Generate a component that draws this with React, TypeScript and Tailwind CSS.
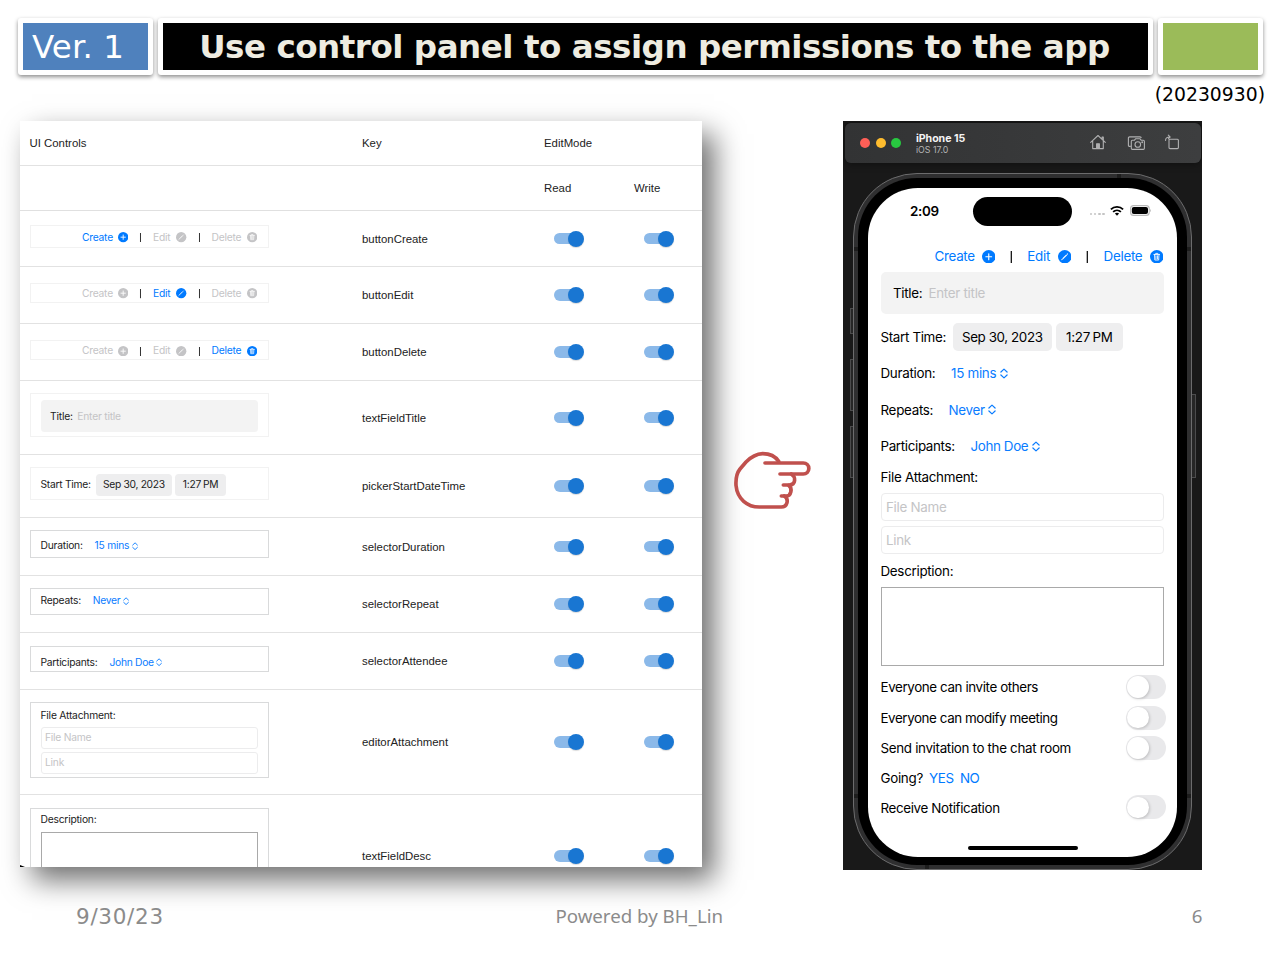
import type { ReactNode } from "react";

function PlusIcon() {
  return (
    <svg className="size-[13.5px] shrink-0" viewBox="0 0 14 14">
      <circle cx="7" cy="7" r="7" fill="currentColor" />
      <path d="M7 4v6M4 7h6" stroke="#fff" strokeWidth="1.2" strokeLinecap="round" />
    </svg>
  );
}

function PencilIcon() {
  return (
    <svg className="size-[13.5px] shrink-0" viewBox="0 0 14 14">
      <circle cx="7" cy="7" r="7" fill="currentColor" />
      <path d="M4.8 9.2 9 5" stroke="#fff" strokeWidth="1.3" />
      <path d="m9.6 4.4.3-.3M4 10l.3-.2" stroke="#fff" strokeWidth="1.1" strokeLinecap="round" />
    </svg>
  );
}

function TrashIcon() {
  return (
    <svg className="size-[13.5px] shrink-0" viewBox="0 0 14 14">
      <circle cx="7" cy="7" r="7" fill="currentColor" />
      <path
        d="M4 4.6h6M5.9 4.4v-.9h2.2v.9M4.7 4.8l.3 5.6h4l.3-5.6M6.2 6v3.2M7.8 6v3.2"
        stroke="#fff"
        strokeWidth=".9"
        fill="none"
        strokeLinejoin="round"
        strokeLinecap="round"
      />
    </svg>
  );
}

function UpDown() {
  return (
    <svg className="h-[11px] w-[8px] shrink-0" viewBox="0 0 8 11" fill="none" stroke="currentColor" strokeWidth="1.2" strokeLinecap="round" strokeLinejoin="round">
      <path d="M.9 4 4 1.1 7.1 4M.9 7 4 9.9 7.1 7" />
    </svg>
  );
}

function Separator() {
  return (
    <svg className="mt-[1px] h-[12px] w-[32.3px] shrink-0" viewBox="0 0 32.3 12">
      <path d="M16.3 0v12" stroke="currentColor" strokeWidth="1.2" />
    </svg>
  );
}

type Action = "create" | "edit" | "delete";

function Toolbar({ active }: { active?: Action }) {
  const tone = (a: Action) => (!active || active === a ? "text-[#007aff]" : "text-[#c4c4c6]");
  return (
    <div className="flex h-[31px] items-center pl-[54px]">
      <span className={`flex items-center ${tone("create")}`}>
        <span className="w-[47px]">Create</span>
        <PlusIcon />
      </span>
      <Separator />
      <span className={`flex items-center ${tone("edit")}`}>
        <span className="w-[30.5px]">Edit</span>
        <PencilIcon />
      </span>
      <Separator />
      <span className={`flex items-center ${tone("delete")}`}>
        <span className="w-[46px]">Delete</span>
        <TrashIcon />
      </span>
    </div>
  );
}

function TitleField() {
  return (
    <div className="flex h-[42px] items-center rounded-[5px] bg-[#f3f3f3] pt-[1px] pl-[12.5px]">
      <span className="w-[35.5px]">Title:</span>
      <span className="text-[#c4c4c6]">Enter title</span>
    </div>
  );
}

function StartTime() {
  return (
    <div className="flex h-[28px] items-center">
      <span className="w-[72px] tracking-[-0.34px]">Start Time:</span>
      <span className="flex h-[28px] w-[99.5px] items-center justify-center rounded-[5px] bg-[#eeeeef] tracking-[-0.4px]">Sep 30, 2023</span>
      <span className="ml-[3.5px] flex h-[28px] w-[67.5px] items-center justify-center rounded-[5px] bg-[#eeeeef] [word-spacing:-1px]">1:27 PM</span>
    </div>
  );
}

function Picker({ label, labelWidth, value, valueWidth }: { label: string; labelWidth: string; value: string; valueWidth: string }) {
  return (
    <div className="flex h-[27px] items-center">
      <span className={labelWidth}>{label}</span>
      <span className="flex items-center text-[#0a7cff]">
        <span className={valueWidth}>{value}</span>
        <UpDown />
      </span>
    </div>
  );
}

const Duration = () => <Picker label="Duration:" labelWidth="w-[70.5px]" value="15 mins" valueWidth="w-[49px]" />;
const Repeats = () => <Picker label="Repeats:" labelWidth="w-[68px]" value="Never" valueWidth="w-[39.5px]" />;
const Participants = () => <Picker label="Participants:" labelWidth="w-[90px] tracking-[-0.35px]" value="John Doe" valueWidth="w-[61px] tracking-[-0.38px]" />;

function Attachment() {
  return (
    <div className="flex flex-col">
      <div className="flex h-[31px] items-center">File Attachment:</div>
      <div className="flex h-[28px] items-center rounded-[4px] border border-[#ececed] pl-[4.5px] text-[#c4c4c6]">File Name</div>
      <div className="mt-[5px] flex h-[28px] items-center rounded-[4px] border border-[#ececed] pl-[4.5px] text-[#c4c4c6]">Link</div>
    </div>
  );
}

function Description() {
  return (
    <div className="flex flex-col">
      <div className="flex h-[33px] items-center pt-[1px]">Description:</div>
      <div className="h-[78.5px] border border-[#a9a9a9]" />
    </div>
  );
}

function PhoneToggle({ label, height, tracking }: { label: string; height: string; tracking: string }) {
  return (
    <div className={`-mr-[1.5px] flex items-center justify-between ${height}`}>
      <span className={`pt-[0.5px] ${tracking}`}>{label}</span>
      <span className="flex h-[24px] w-[40px] items-center rounded-full bg-[#e9e9eb] px-[1.5px]">
        <span className="size-[21.5px] rounded-full bg-white shadow-[1px_1px_3px_rgba(0,0,0,0.18)]" />
      </span>
    </div>
  );
}

function MuiSwitch() {
  return (
    <span className="flex h-[16px] w-[30px] items-center">
      <span className="h-[11.5px] w-[26px] rounded-full bg-[#8bb9e9]" />
      <span className="-ml-[12px] size-[16px] shrink-0 rounded-full bg-[#1976d2] shadow-[0_1px_1px_rgba(0,0,0,0.15)]" />
    </span>
  );
}

function Preview({ box, inner, children }: { box: string; inner: string; children: ReactNode }) {
  return (
    <div className={`w-[239px] shrink-0 self-start overflow-hidden border pl-[10px] font-[Inter,sans-serif] text-[#222] ${box}`}>
      <div className={`w-[283px] text-[13.4px] tracking-[-0.28px] [zoom:0.767] ${inner}`}>{children}</div>
    </div>
  );
}

const controls: { key: string; row: string; box: string; inner: string; view: ReactNode }[] = [
  { key: "buttonCreate", row: "h-[56px]", box: "mt-[14px] h-[23px] border-[#f2f2f2]", inner: "-mt-[0.5px]", view: <Toolbar active="create" /> },
  { key: "buttonEdit", row: "h-[57px]", box: "mt-[16px] h-[20px] border-[#f2f2f2]", inner: "-mt-[3px]", view: <Toolbar active="edit" /> },
  { key: "buttonDelete", row: "h-[57px]", box: "mt-[16px] h-[20px] border-[#f2f2f2]", inner: "-mt-[2.5px]", view: <Toolbar active="delete" /> },
  { key: "textFieldTitle", row: "h-[74px]", box: "mt-[12px] h-[44px] border-[#f2f2f2]", inner: "mt-[8px]", view: <TitleField /> },
  { key: "pickerStartDateTime", row: "h-[63px]", box: "mt-[12px] h-[33px] border-[#f2f2f2]", inner: "mt-[8px]", view: <StartTime /> },
  { key: "selectorDuration", row: "h-[58px]", box: "mt-[12px] h-[28px] border-[#d9dadb]", inner: "mt-[6px]", view: <Duration /> },
  { key: "selectorRepeat", row: "h-[57px]", box: "mt-[12px] h-[27px] border-[#d9dadb]", inner: "mt-[2px]", view: <Repeats /> },
  { key: "selectorAttendee", row: "h-[57px]", box: "mt-[13px] h-[26px] border-[#d9dadb]", inner: "mt-[6.5px]", view: <Participants /> },
  { key: "editorAttachment", row: "h-[105px]", box: "mt-[12px] h-[76px] border-[#d9dadb]", inner: "mt-[0.5px]", view: <Attachment /> },
  { key: "textFieldDesc", row: "h-[123px]", box: "mt-[13px] h-[104px] border-[#d9dadb]", inner: "-mt-[3px]", view: <Description /> },
];

function ControlTable() {
  return (
    <section className="relative h-[746px] w-[682px] shrink-0 overflow-hidden bg-white font-['Liberation_Sans',Arial,sans-serif] text-[11.4px] text-[#222]">
      <div className="flex h-[45px] items-center border-b border-[#e2e2e2] pt-[1px] pl-[9.5px]">
        <span className="w-[332.5px]">UI Controls</span>
        <span className="w-[182px]">Key</span>
        <span>EditMode</span>
      </div>
      <div className="flex h-[45px] items-center border-b border-[#e0e0e0] pt-[1px] pl-[524px]">
        <span className="w-[90px]">Read</span>
        <span>Write</span>
      </div>
      {controls.map((c) => (
        <div key={c.key} className={`flex items-center border-b border-[#e2e2e2] pl-[9.5px] ${c.row}`}>
          <Preview box={c.box} inner={c.inner}>
            {c.view}
          </Preview>
          <span className="ml-[93.5px] w-[192px] pt-[1.5px]">{c.key}</span>
          <span className="w-[90px]">
            <MuiSwitch />
          </span>
          <MuiSwitch />
        </div>
      ))}
      <svg className="absolute bottom-0 left-0 h-[2px] w-[5px]" viewBox="0 0 5 2">
        <path d="M0 0 5 2H0z" />
      </svg>
    </section>
  );
}

function PointingHand() {
  return (
    <svg className="ml-[18px] mt-[309px] h-[100px] w-[110px] shrink-0" viewBox="0 0 330 300" fill="none" stroke="#c0504d" strokeWidth="11" strokeLinecap="round" strokeLinejoin="round">
      <path d="M176 94C164 76 146 71 128 71 106 72 90 84 78 96L60 117C48 132 47 148 48 166 52 207 82 231 118 231H184C202 231 208 208 193 198" />
      <path d="M135 99H250a16.5 16.5 0 0 1 0 33H180" />
      <path d="M214 132C228 141 228 164 208 165H190" />
      <path d="M206 166C218 175 214 198 198 198H184" />
    </svg>
  );
}

function SimulatorBar() {
  return (
    <div className="mx-[1.5px] mt-[2px] flex h-[40px] shrink-0 items-center rounded-[6px] bg-linear-to-r from-[#323334] to-[#3d3e3f] pl-[15.5px] shadow-[0_0_8px_rgba(0,0,0,0.5)]">
      <span className="flex gap-[5.6px]">
        <span className="size-[10px] rounded-full bg-[#ff5f57]" />
        <span className="size-[10px] rounded-full bg-[#febc2e]" />
        <span className="size-[10px] rounded-full bg-[#28c840]" />
      </span>
      <span className="ml-[14.8px] flex w-[173px] flex-col font-[Inter,sans-serif]">
        <span className="pt-[1px] text-[10.6px] leading-[12px] font-bold tracking-[-0.05px] text-[#f4f4f4]">iPhone 15</span>
        <span className="text-[8.8px] leading-[10px] text-[#b4b4b5]">iOS 17.0</span>
      </span>
      <span className="flex items-center text-[#b0b0b1]">
        <svg className="-mt-[2px] h-[16px] w-[18px]" viewBox="0 0 18 16" fill="none" stroke="currentColor" strokeWidth="1.1" strokeLinejoin="round" strokeLinecap="round">
          <path d="M1.7 8.4 9 1.5l7.3 6.9M3.7 7v7.6h10.6V7M14.3 6V3h-1.2v1.7" />
          <path d="M7.6 14.4V9.8h2.8v4.6z" fill="currentColor" />
        </svg>
        <svg className="ml-[20px] -mt-[1px] h-[16px] w-[19px]" viewBox="0 0 19 16" fill="none" stroke="currentColor" strokeWidth="1.1" strokeLinejoin="round">
          <path d="M3.8 11.4H2.6a1.2 1.2 0 0 1-1.2-1.2V3.1a1.2 1.2 0 0 1 1.2-1.2h10.4a1.2 1.2 0 0 1 1.2 1.2" />
          <path d="M5.4 5.3h1.9l1.2-1.5h4.6l1.2 1.5h2a1.1 1.1 0 0 1 1.1 1.1v6.9a1.1 1.1 0 0 1-1.1 1.1H5.4a1.1 1.1 0 0 1-1.1-1.1V6.4a1.1 1.1 0 0 1 1.1-1.1z" />
          <circle cx="10.8" cy="9.5" r="2.8" />
          <circle cx="15.2" cy="7.3" r=".4" fill="currentColor" />
        </svg>
        <svg className="ml-[18px] -mt-[2px] h-[16px] w-[16px]" viewBox="0 0 16 16" fill="none" stroke="currentColor" strokeWidth="1.1" strokeLinejoin="round" strokeLinecap="round">
          <rect x="5" y="5.2" width="9.4" height="9.4" rx="1" />
          <path d="M1.6 6.4C1.4 4.2 3 3 5.9 3M4.3 1.2 6.1 3 4.3 4.8" />
        </svg>
      </span>
    </div>
  );
}

function StatusBar() {
  return (
    <div className="flex h-[46px] items-center pl-[42px]">
      <span className="w-[63px] text-[13.4px] font-semibold tracking-[-0.35px]">2:09</span>
      <span className="h-[29px] w-[99px] rounded-full bg-black" />
      <span className="ml-[17.5px] mt-[6px] flex gap-[1.7px]">
        <span className="size-[2.6px] rounded-full bg-[#c4c4c4]" />
        <span className="size-[2.6px] rounded-full bg-[#c4c4c4]" />
        <span className="size-[2.6px] rounded-full bg-[#c4c4c4]" />
        <span className="size-[2.6px] rounded-full bg-[#c4c4c4]" />
      </span>
      <svg className="ml-[5.5px] h-[10px] w-[14px]" viewBox="0 0 14 10" fill="none" stroke="#000" strokeWidth="1.8">
        <path d="M.9 3.4C4.2.1 9.8.1 13.1 3.4M3.1 5.8c2.2-2 5.6-2 7.8 0" />
        <path d="M7 9.7 4.9 7.5c1.2-1 3-1 4.2 0z" fill="#000" stroke="none" />
      </svg>
      <svg className="-mt-[1px] ml-[5.5px] h-[11px] w-[22px]" viewBox="0 0 22 11">
        <rect x=".6" y=".6" width="18.6" height="9.8" rx="3" fill="none" stroke="#b8b8b8" strokeWidth="1.1" />
        <rect x="1.8" y="1.9" width="16.2" height="7.2" rx="2" />
        <path d="M20.2 3.9c1 .6 1 2.6 0 3.2z" fill="#b2b2b2" />
      </svg>
    </div>
  );
}

function Phone() {
  return (
    <section className="relative ml-[13px] flex h-[749px] w-[359px] shrink-0 flex-col overflow-hidden bg-[#191919]">
      <SimulatorBar />
      <span className="absolute top-[187px] left-[7px] h-[26px] w-[5px] border border-[#4c4c4d] bg-[#262626]" />
      <span className="absolute top-[238px] left-[7px] h-[52px] w-[5px] border border-[#4c4c4d] bg-[#262626]" />
      <span className="absolute top-[305px] left-[7px] h-[52px] w-[5px] border border-[#4c4c4d] bg-[#262626]" />
      <span className="absolute top-[273px] right-[6px] h-[84px] w-[5px] border border-[#4c4c4d] bg-[#262626]" />
      <div className="relative ml-[10px] mt-[10px] h-[697px] w-[339px] shrink-0 rounded-[64px] border border-[#6c6c6d] bg-[#2f2f30] p-[4px]">
        <div className="h-full rounded-[59px] bg-black px-[10px] pt-[10px] pb-[8.5px]">
          <div className="flex h-full flex-col overflow-hidden rounded-[50px] bg-white font-[Inter,sans-serif] text-[13.4px] tracking-[-0.3px] text-black">
            <StatusBar />
            <div className="flex flex-col pt-[7px] pr-[13px] pl-[12.5px]">
              <Toolbar />
              <TitleField />
              <div className="py-[9px]">
                <StartTime />
              </div>
              <Duration />
              <div className="py-[9.5px]">
                <Repeats />
              </div>
              <Participants />
              <div className="pt-[2px]">
                <Attachment />
              </div>
              <Description />
              <div className="pt-[6px]">
                <PhoneToggle label="Everyone can invite others" height="h-[30.7px]" tracking="tracking-[-0.4px]" />
                <PhoneToggle label="Everyone can modify meeting" height="h-[30.7px]" tracking="tracking-[-0.43px]" />
                <PhoneToggle label="Send invitation to the chat room" height="h-[30.7px]" tracking="tracking-[-0.33px]" />
              </div>
              <div className="flex h-[28.5px] items-center pt-[1px]">
                <span className="w-[48.5px]">Going?</span>
                <span className="w-[31px] text-[#007aff]">YES</span>
                <span className="tracking-[-0.5px] text-[#007aff]">NO</span>
              </div>
              <PhoneToggle label="Receive Notification" height="h-[30.5px]" tracking="tracking-[-0.37px]" />
            </div>
            <span className="mt-auto mb-[6.5px] h-[4px] w-[110px] self-center rounded-full bg-black" />
          </div>
        </div>
        <span className="absolute top-[73px] left-0 h-[4px] w-[4px] bg-[#1d1d1d]" />
        <span className="absolute top-[73px] right-0 h-[4px] w-[4px] bg-[#1d1d1d]" />
        <span className="absolute top-[620px] left-0 h-[4px] w-[4px] bg-[#1d1d1d]" />
        <span className="absolute top-[620px] right-0 h-[4px] w-[4px] bg-[#1d1d1d]" />
        <span className="absolute top-0 left-[263px] h-[4px] w-[4px] bg-[#1d1d1d]" />
        <span className="absolute bottom-0 left-[71px] h-[4px] w-[4px] bg-[#1d1d1d]" />
      </div>
    </section>
  );
}

export default function App() {
  return (
    <main className="flex h-[960px] w-[1280px] flex-col overflow-hidden bg-white font-['DejaVu_Sans',Verdana,sans-serif]">
      <header className="mt-[18px] flex h-[57px] shrink-0 gap-[5px] pl-[18px]">
        <div className="flex w-[135px] items-center rounded-[3px] border-5 border-white bg-[#4f81bd] pt-[2px] pl-[9px] text-[32.5px] tracking-[0.1px] whitespace-nowrap text-white shadow-[0_2px_4px_rgba(0,0,0,0.45)]">
          Ver. 1
        </div>
        <div className="flex w-[995px] items-center justify-center rounded-[3px] border-5 border-white bg-black pt-[2px] pr-[2px] text-[32.5px] font-bold tracking-[-0.46px] whitespace-nowrap text-[#eeece1] shadow-[0_2px_4px_rgba(0,0,0,0.45)]">
          Use control panel to assign permissions to the app
        </div>
        <div className="w-[105px] rounded-[3px] border-5 border-white bg-[#9bbb59] shadow-[0_2px_4px_rgba(0,0,0,0.45)]" />
      </header>
      <p className="flex h-[46px] shrink-0 items-start justify-end pt-[9px] pr-[15px] text-[18.8px] leading-[22px] text-black">(20230930)</p>
      <div className="flex h-[749px] shrink-0 items-start pl-[20px]">
        <div className="shadow-[12px_13px_27px_rgba(0,0,0,0.57)]">
          <ControlTable />
        </div>
        <PointingHand />
        <Phone />
      </div>
      <footer className="grid h-[92px] grid-cols-3 items-center pt-[2px] pr-[77.5px] pl-[76px] text-[#8b8b8b]">
        <span className="pt-[3px] text-[21.5px] tracking-[0.7px]">9/30/23</span>
        <span className="text-center font-['Noto_Sans',sans-serif] text-[18.7px]">Powered by BH_Lin</span>
        <span className="text-right font-['Noto_Sans',sans-serif] text-[18.7px]">6</span>
      </footer>
    </main>
  );
}
